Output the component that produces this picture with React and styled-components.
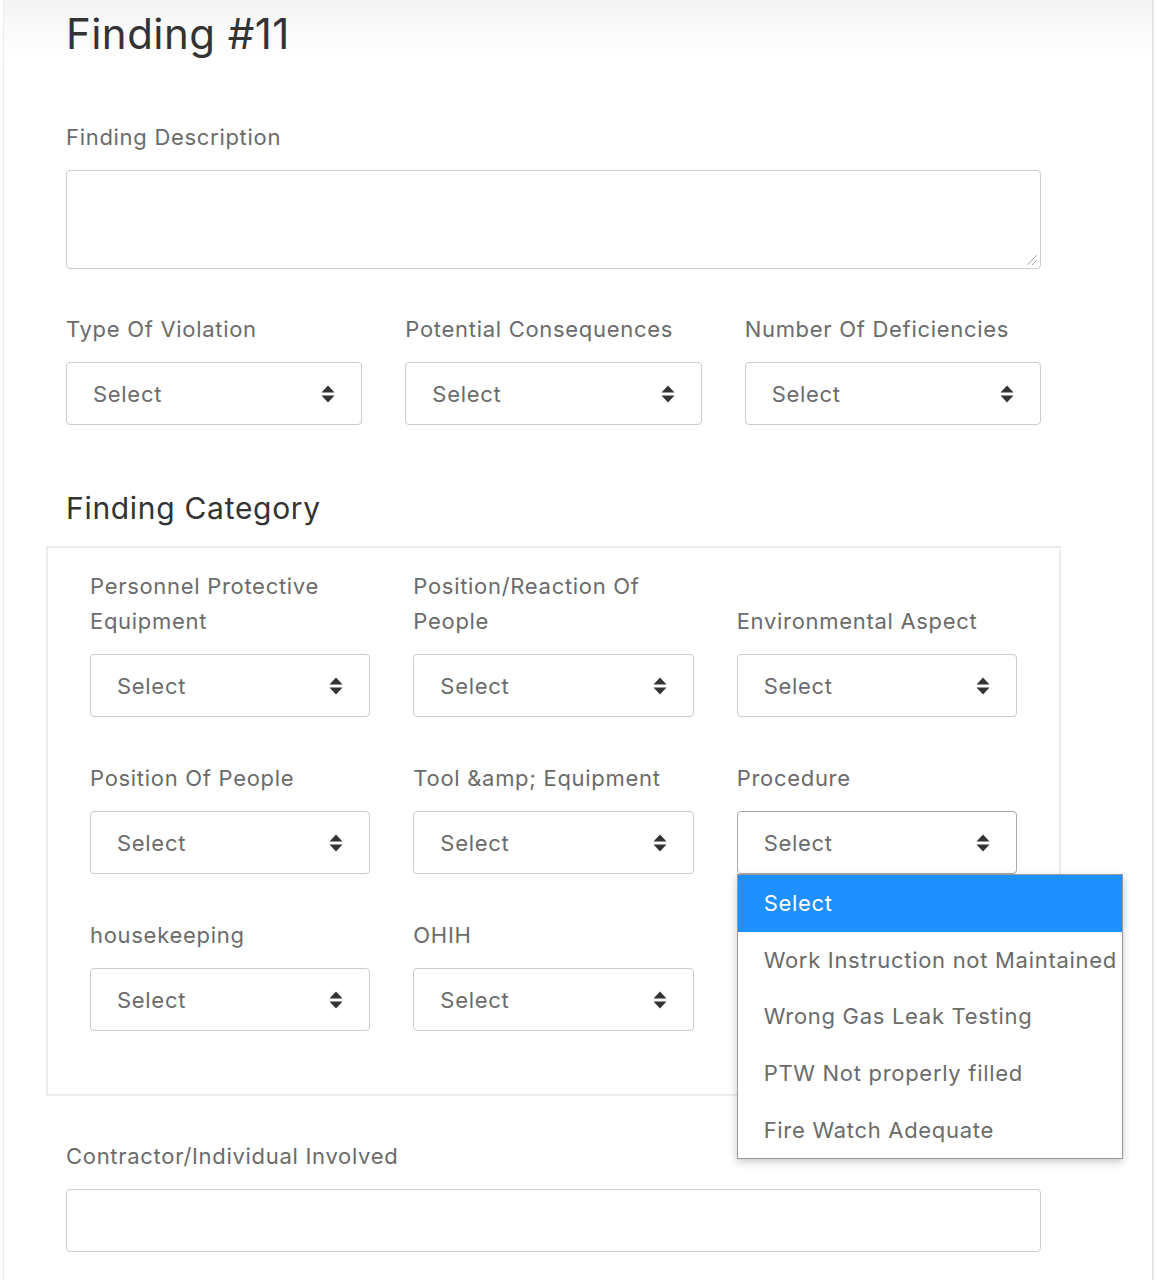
import React from 'react';
import styled, { createGlobalStyle } from 'styled-components';

const GlobalStyle = createGlobalStyle`
  html, body {
    margin: 0;
    padding: 0;
    background: #fff;
  }
  body {
    font-family: Inter, "Liberation Sans", sans-serif;
  }
`;

// Styles
const Page = styled.div`
  min-height: 1280px;
  margin: 0 3px;
  border-left: 1px solid #ececec;
  border-right: 2px solid #e6e6e6;
  background: linear-gradient(#f4f4f4 0px, #fafafa 30px, #fff 62px);
  box-sizing: border-box;
`;

const Content = styled.div`
  width: 975px;
  margin-left: 62px;
  padding-top: 9px;
`;

const Title = styled.h1`
  margin: 0;
  font-size: 42px;
  line-height: 50px;
  font-weight: 400;
  letter-spacing: 0.45px;
  color: #333;
`;

const SectionTitle = styled.h2`
  margin: 22px 0 20px;
  font-size: 30px;
  line-height: 36px;
  font-weight: 400;
  letter-spacing: 0.7px;
  color: #333;
`;

const Group = styled.div`
  display: flex;
  flex-direction: column;
  justify-content: flex-end;
  margin-bottom: ${p => p.gap ?? 44}px;
  margin-top: ${p => p.top || 0}px;
  position: relative;
`;

const Label = styled.label`
  display: block;
  font-size: 22px;
  line-height: 35px;
  letter-spacing: 0.7px;
  color: #6b6b6b;
  margin-bottom: 15px;
`;

const TextArea = styled.div`
  height: 99px;
  border: 1px solid #ccc;
  border-radius: 4px;
  box-sizing: border-box;
  position: relative;
`;

const Grip = styled.svg`
  position: absolute;
  right: 2px;
  bottom: 2px;
`;

const Input = styled.div`
  height: 63px;
  border: 1px solid #ccc;
  border-radius: 4px;
  box-sizing: border-box;
`;

const Row = styled.div`
  display: grid;
  grid-template-columns: repeat(3, 1fr);
  column-gap: 43px;
  align-items: end;
`;

const SelectBox = styled.div`
  height: 63px;
  border: 1px solid ${p => (p.open ? '#aaa' : '#ccc')};
  border-radius: 4px;
  box-sizing: border-box;
  display: flex;
  align-items: center;
  justify-content: space-between;
  padding: 0 26px;
  font-size: 22px;
  letter-spacing: 0.7px;
  color: #6b6b6b;
  background: #fff;
`;

const CategoryBox = styled.div`
  margin: 0 -20px;
  border: 2px solid #ececec;
  padding: 21px 42px 19px;
`;

const Menu = styled.ul`
  position: absolute;
  top: 100%;
  left: 0;
  width: 384px;
  margin: 0;
  padding: 0;
  list-style: none;
  background: #fff;
  border: 1px solid #999;
  box-shadow: 0 3px 8px rgba(0, 0, 0, 0.22);
  z-index: 2;
`;

const Option = styled.li`
  height: 56.6px;
  display: flex;
  align-items: center;
  padding-left: 26px;
  font-size: 22px;
  letter-spacing: 0.7px;
  white-space: nowrap;
  overflow: hidden;
  color: ${p => (p.active ? '#fff' : '#6b6b6b')};
  background: ${p => (p.active ? '#1e90ff' : '#fff')};
`;

const Caret = () => (
  <svg width="14" height="18" viewBox="0 0 14 18">
    <path d="M7 0.5 L13.5 7.5 H0.5 Z" fill="#333" />
    <path d="M7 17.5 L13.5 10.5 H0.5 Z" fill="#333" />
  </svg>
);

const Select = ({ open }) => (
  <SelectBox open={open}>
    <span>Select</span>
    <Caret />
  </SelectBox>
);

const procedureOptions = [
  'Select',
  'Work Instruction not Maintained',
  'Wrong Gas Leak Testing',
  'PTW Not properly filled',
  'Fire Watch Adequate'
];

const Field = ({ label, open, gap, children }) => (
  <Group gap={gap}>
    <Label>{label}</Label>
    <Select open={open} />
    {children}
  </Group>
);

const App = () => (
  <Page>
    <GlobalStyle />
    <Content>
      <Title>Finding #11</Title>

      <Group top={61} gap={43}>
        <Label>Finding Description</Label>
        <TextArea>
          <Grip width="14" height="14" viewBox="0 0 14 14">
            <path d="M13 3 L3 13 M13 8 L8 13" stroke="#aaa" strokeWidth="1" />
          </Grip>
        </TextArea>
      </Group>

      <Row>
        <Field label="Type Of Violation" gap={43} />
        <Field label="Potential Consequences" gap={43} />
        <Field label="Number Of Deficiencies" gap={43} />
      </Row>

      <SectionTitle>Finding Category</SectionTitle>
      <CategoryBox>
        <Row>
          <Field label={<>Personnel Protective<br />Equipment</>} />
          <Field label={<>Position/Reaction Of<br />People</>} />
          <Field label="Environmental Aspect" />
        </Row>
        <Row>
          <Field label="Position Of People" />
          <Field label={'Tool &amp; Equipment'} />
          <Field label="Procedure" open>
            <Menu>
              {procedureOptions.map((opt, i) => (
                <Option key={opt} active={i === 0}>{opt}</Option>
              ))}
            </Menu>
          </Field>
        </Row>
        <Row>
          <Field label="housekeeping" />
          <Field label="OHIH" />
        </Row>
      </CategoryBox>

      <Group top={43}>
        <Label>Contractor/Individual Involved</Label>
        <Input />
      </Group>
    </Content>
  </Page>
);

export default App;
